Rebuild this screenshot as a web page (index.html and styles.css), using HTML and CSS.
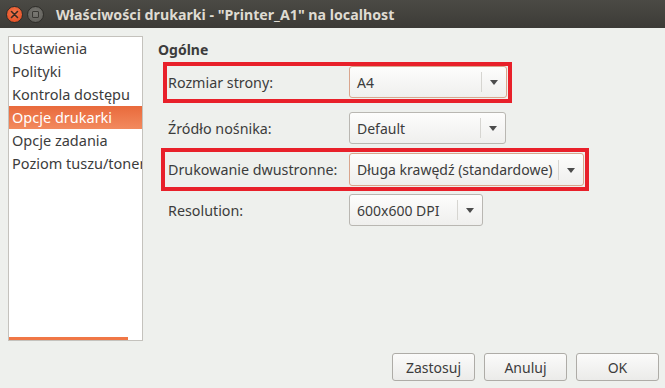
FILE: index.html
```html
<!DOCTYPE html>
<html lang="pl">
<head>
    <meta charset="UTF-8">
    <title>Właściwości drukarki</title>
    <link rel="stylesheet" href="styles.css">
</head>
<body>
    <div class="window">
        <div class="titlebar">
            <span class="wbtn close"><svg width="9" height="9" viewBox="0 0 9 9"><path d="M1.5 1.5L7.5 7.5M7.5 1.5L1.5 7.5" stroke="#3a2a22" stroke-width="1.6" stroke-linecap="round"/></svg></span>
            <span class="wbtn maximize"><span class="square"></span></span>
            <span class="title">Właściwości drukarki - "Printer_A1" na localhost</span>
        </div>

        <div class="content">
            <div class="sidebar">
                <ul class="pages">
                    <li>Ustawienia</li>
                    <li>Polityki</li>
                    <li>Kontrola dostępu</li>
                    <li class="selected">Opcje drukarki</li>
                    <li>Opcje zadania</li>
                    <li>Poziom tuszu/tonera</li>
                </ul>
                <div class="scrollbar"></div>
            </div>

            <div class="panel">
                <h2>Ogólne</h2>
                <div class="row row-1 marked">
                    <span class="label">Rozmiar strony:</span>
                    <div class="combo focus" style="width:158px"><span class="value">A4</span><span class="arrow"></span></div>
                </div>
                <div class="row row-2">
                    <span class="label">Źródło nośnika:</span>
                    <div class="combo" style="width:157px"><span class="value">Default</span><span class="arrow"></span></div>
                </div>
                <div class="row row-3 marked wide">
                    <span class="label">Drukowanie dwustronne:</span>
                    <div class="combo focus" style="width:235px"><span class="value">Długa krawędź (standardowe)</span><span class="arrow"></span></div>
                </div>
                <div class="row row-4">
                    <span class="label">Resolution:</span>
                    <div class="combo" style="width:134px"><span class="value">600x600 DPI</span><span class="arrow"></span></div>
                </div>
            </div>
        </div>

        <div class="buttons">
            <button>Zastosuj</button>
            <button>Anuluj</button>
            <button>OK</button>
        </div>
    </div>
</body>
</html>
```

FILE: styles.css
```css
body {
    margin: 0;
    padding: 0;
    font-family: "Noto Sans", "Open Sans", sans-serif;
    font-size: 14px;
    color: #3c3c3c;
    background-color: #eef0ed;
}
.window {
    width: 665px;
    height: 388px;
    display: flex;
    flex-direction: column;
    overflow: hidden;
}
.titlebar {
    height: 28px;
    display: flex;
    align-items: center;
    padding-left: 6px;
    background: linear-gradient(#4b4a45, #3c3b37);
    color: #dfdbd2;
}
.wbtn {
    width: 17px;
    height: 17px;
    border-radius: 50%;
    display: flex;
    align-items: center;
    justify-content: center;
    margin-right: 4px;
    box-sizing: border-box;
}
.close {
    background: radial-gradient(circle at 50% 40%, #f57a4e, #e0461c);
    border: 1px solid #2e2d29;
}
.maximize {
    background: radial-gradient(circle at 50% 40%, #7a7974, #5b5a55);
    border: 1px solid #2e2d29;
}
.square {
    width: 7px;
    height: 7px;
    border: 1.5px solid #3a3935;
    border-radius: 1px;
    box-sizing: border-box;
}
.title {
    margin-left: 8px;
    font-weight: bold;
    font-size: 14.2px;
}
.content {
    display: flex;
    padding: 8px 0 0 8px;
    height: 305px;
}
.sidebar {
    width: 135px;
    height: 305px;
    box-sizing: border-box;
    background-color: #fff;
    border: 1px solid #c4c2bd;
    position: relative;
    overflow: hidden;
}
.pages {
    list-style: none;
    margin: 0;
    padding: 0;
}
.pages li {
    height: 23px;
    line-height: 22px;
    padding-left: 3px;
    white-space: nowrap;
    font-size: 14.5px;
    color: #3c3c3c;
}
.pages li.selected {
    background: linear-gradient(#e96a3c, #f28a5e);
    color: #fff;
}
.scrollbar {
    position: absolute;
    left: 0;
    bottom: 0;
    width: 119px;
    height: 3px;
    background-color: #f07746;
}
.panel {
    margin-left: 15px;
    flex: 1;
}
h2 {
    font-size: 14px;
    font-weight: bold;
    margin: 5px 0 0 0;
    line-height: 18px;
}
.row {
    display: flex;
    align-items: center;
    position: relative;
    padding-left: 10px;
}
.row-1 { margin-top: 7px; }
.row-2 { margin-top: 14px; }
.row-3 { margin-top: 9px; }
.row-4 { margin-top: 8px; }
.label {
    width: 181px;
    flex: none;
    font-size: 14.3px;
}
.marked::before {
    content: "";
    position: absolute;
    left: 5px;
    top: -4px;
    width: 349px;
    height: 41px;
    box-sizing: border-box;
    border: 4px solid #e8202a;
}
.marked.wide::before {
    left: 3px;
    top: -5px;
    width: 428px;
    height: 43px;
}
.combo {
    height: 32px;
    box-sizing: border-box;
    border: 1px solid #b9b7b2;
    border-radius: 3px;
    background: linear-gradient(#fdfdfc, #efefed);
    display: flex;
    align-items: center;
    position: relative;
    font-size: 14px;
}
.combo.focus {
    border-color: #d9a58d;
}
.combo .value {
    padding-left: 7px;
    flex: 1;
    white-space: nowrap;
}
.combo .arrow {
    width: 24px;
    height: 20px;
    border-left: 1px solid #d6d5d1;
    position: relative;
    flex: none;
}
.combo .arrow::after {
    content: "";
    position: absolute;
    left: 8px;
    top: 8px;
    border-left: 4px solid transparent;
    border-right: 4px solid transparent;
    border-top: 5px solid #4c4c4c;
}
.row-3 .combo {
    height: 33px;
}
.buttons {
    display: flex;
    justify-content: flex-end;
    gap: 9px;
    padding: 12px 6px 0 0;
}
button {
    width: 83px;
    height: 28px;
    font-family: inherit;
    font-size: 14px;
    color: #3c3c3c;
    border: 1px solid #aeaca7;
    border-radius: 3px;
    background: linear-gradient(#fbfbfa, #ebebe9);
}
```
